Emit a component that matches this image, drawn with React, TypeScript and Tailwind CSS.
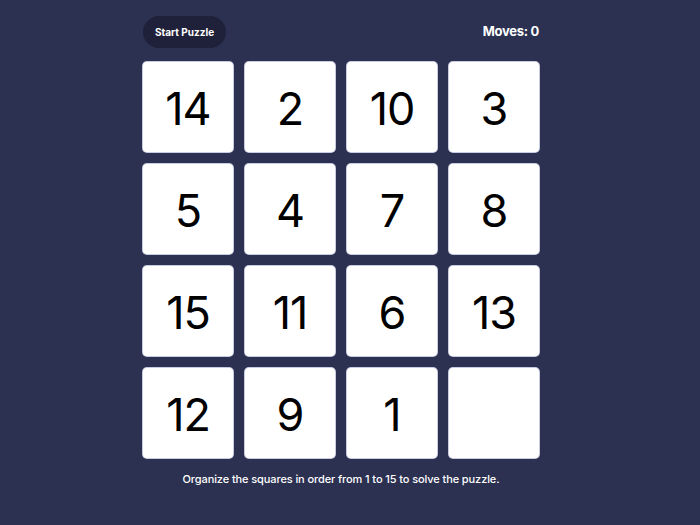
const tiles = [14, 2, 10, 3, 5, 4, 7, 8, 15, 11, 6, 13, 12, 9, 1, 0];

export default function App() {
  return (
    <div className="min-h-[525px] w-full bg-[#2c3152] font-['Inter','Liberation_Sans',sans-serif] text-white">
      <div className="ml-[143px] w-[396px] pt-4">
        {/* Header */}
        <div className="flex items-center justify-between h-8 mb-[13px]">
          <button className="h-8 px-[12px] rounded-full bg-[#1f2039] text-[10px] font-bold text-white">
            Start Puzzle
          </button>
          <div className="text-[13px] font-bold tracking-[-0.3px]">Moves: 0</div>
        </div>

        {/* Board */}
        <div className="grid grid-cols-4 gap-3 pt-px">
          {tiles.map((n) => (
            <div
              key={n}
              className="h-[90px] w-[90px] rounded-[4px] bg-white shadow-[0_0_0_1px_#c9cbe0] flex items-center justify-center pt-1 text-[45px] text-black font-normal tracking-[-1px]"
            >
              {n > 0 ? n : ""}
            </div>
          ))}
        </div>

        <p className="mt-[13px] text-center text-[11px] font-medium tracking-[-0.1px]">
          Organize the squares in order from 1 to 15 to solve the puzzle.
        </p>
      </div>
    </div>
  );
}
